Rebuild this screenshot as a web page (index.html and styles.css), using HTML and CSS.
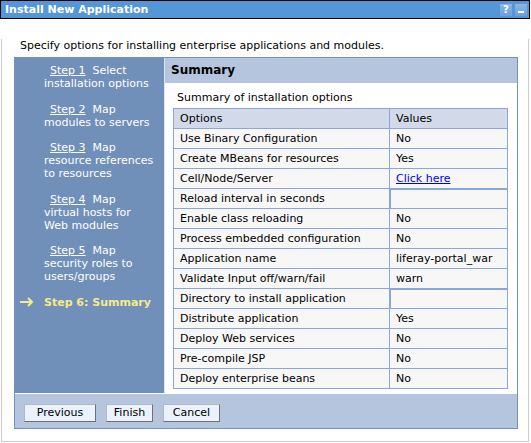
FILE: index.html
```html
<!DOCTYPE html>
<html>
<head>
    <title>Install New Application</title>
    <link rel="stylesheet" href="styles.css">
</head>
<body>
    <div class="window">
        <div class="titlebar">
            <span class="title">Install New Application</span>
            <span class="tools">
                <span class="tool">?</span>
                <span class="tool minimize"></span>
            </span>
        </div>

        <div class="window-body">
            <p class="intro">Specify options for installing enterprise applications and modules.</p>

            <div class="panel">
                <div class="wizard">
                    <div class="steps">
                        <div class="step">
                            <span class="marker"></span>
                            <span class="step-text"><a class="step-link">Step 1</a>&nbsp;&nbsp;Select<br>installation options</span>
                        </div>
                        <div class="step">
                            <span class="marker"></span>
                            <span class="step-text"><a class="step-link">Step 2</a>&nbsp;&nbsp;Map<br>modules to servers</span>
                        </div>
                        <div class="step">
                            <span class="marker"></span>
                            <span class="step-text"><a class="step-link">Step 3</a>&nbsp;&nbsp;Map<br>resource references<br>to resources</span>
                        </div>
                        <div class="step">
                            <span class="marker"></span>
                            <span class="step-text"><a class="step-link">Step 4</a>&nbsp;&nbsp;Map<br>virtual hosts for<br>Web modules</span>
                        </div>
                        <div class="step">
                            <span class="marker"></span>
                            <span class="step-text"><a class="step-link">Step 5</a>&nbsp;&nbsp;Map<br>security roles to<br>users/groups</span>
                        </div>
                        <div class="step current">
                            <span class="marker">
                                <svg width="14" height="10" viewBox="0 0 14 10">
                                    <path d="M0 5 H12 M8 1 L12 5 L8 9" fill="none" stroke="#f6ea8c" stroke-width="2"/>
                                </svg>
                            </span>
                            <span class="step-text">Step 6: Summary</span>
                        </div>
                    </div>

                    <div class="page">
                        <div class="page-head">Summary</div>
                        <div class="page-body">
                            <p class="caption">Summary of installation options</p>
                            <table class="summary">
                                <tr><th class="opt">Options</th><th>Values</th></tr>
                                <tr><td>Use Binary Configuration</td><td>No</td></tr>
                                <tr><td>Create MBeans for resources</td><td>Yes</td></tr>
                                <tr><td>Cell/Node/Server</td><td><a class="link">Click here</a></td></tr>
                                <tr><td>Reload interval in seconds</td><td class="empty"></td></tr>
                                <tr><td>Enable class reloading</td><td>No</td></tr>
                                <tr><td>Process embedded configuration</td><td>No</td></tr>
                                <tr><td>Application name</td><td>liferay-portal_war</td></tr>
                                <tr><td>Validate Input off/warn/fail</td><td>warn</td></tr>
                                <tr><td>Directory to install application</td><td class="empty"></td></tr>
                                <tr><td>Distribute application</td><td>Yes</td></tr>
                                <tr><td>Deploy Web services</td><td>No</td></tr>
                                <tr><td>Pre-compile JSP</td><td>No</td></tr>
                                <tr><td>Deploy enterprise beans</td><td>No</td></tr>
                            </table>
                        </div>
                    </div>
                </div>

                <div class="buttons">
                    <button class="btn btn-previous">Previous</button>
                    <button class="btn btn-finish">Finish</button>
                    <button class="btn btn-cancel">Cancel</button>
                </div>
            </div>
        </div>
    </div>
</body>
</html>
```

FILE: styles.css
```css
body {
    margin: 0;
    background: white;
    font-family: "DejaVu Sans", Verdana, sans-serif;
    font-size: 11px;
    color: black;
}

.window {
    width: 530px;
}

.titlebar {
    height: 17px;
    border: 1px solid black;
    background-color: #5596d6;
    display: flex;
    align-items: center;
    justify-content: space-between;
    padding-left: 4px;
}

.title {
    color: white;
    font-weight: bold;
    font-size: 11px;
}

.tools {
    display: flex;
    gap: 3px;
    padding-right: 2px;
}

.tool {
    width: 12px;
    height: 12px;
    background: linear-gradient(to bottom, #8cb6e6, #6a9fdb);
    color: white;
    font-size: 10px;
    font-weight: bold;
    line-height: 12px;
    text-align: center;
}

.minimize {
    position: relative;
}

.minimize::after {
    content: "";
    position: absolute;
    left: 3px;
    right: 3px;
    bottom: 3px;
    height: 2px;
    background-color: white;
}

.window-body {
    margin: 0 1px;
    border: 1px solid #cccccc;
    border-top: none;
    padding: 0 10px 12px 12px;
}

.intro {
    margin: 20px 0 4px 6px;
    line-height: 14px;
}

.panel {
    border: 1px solid #7492c0;
}

.wizard {
    display: flex;
}

.steps {
    width: 149px;
    background-color: #7190b9;
    color: white;
    padding-top: 6px;
}

.step {
    display: flex;
    line-height: 13px;
    margin-bottom: 12.5px;
}

.marker {
    width: 29px;
    flex-shrink: 0;
    display: flex;
    align-items: center;
    padding-left: 5px;
    box-sizing: border-box;
}

.step-text {
    text-indent: 6px;
}

.step-link {
    color: white;
    text-decoration: underline;
}

.current .step-text {
    color: #f6ea8c;
    font-weight: bold;
    text-indent: 0;
}

.page {
    flex: 1;
    border-left: 1px solid #dfe6f1;
    background-color: white;
}

.page-head {
    height: 25px;
    background-color: #b5c5de;
    font-weight: bold;
    font-size: 12px;
    line-height: 25px;
    padding-left: 6px;
}

.page-body {
    padding: 8px 9px 4px 8px;
}

.caption {
    margin: 0 0 3px 4px;
    line-height: 14px;
}

.summary {
    width: 100%;
    border-collapse: collapse;
    border: 1px solid #8ca6dc;
}

.summary th,
.summary td {
    border: 1px solid #8ca6dc;
    height: 19px;
    line-height: 17px;
    padding: 0 6px;
    text-align: left;
    font-weight: normal;
    white-space: nowrap;
}

.summary th {
    background-color: #d2d9e8;
}

.summary td {
    background-color: #f7f7f7;
}

.summary .opt {
    width: 203px;
}

.summary td.empty {
    box-shadow: inset 1px 1px 0 #8ca6dc;
}

.link {
    color: #0000ee;
    text-decoration: underline;
}

.buttons {
    margin-top: 1px;
    height: 34px;
    background-color: #b5c5de;
    padding: 10px 0 0 9px;
    box-sizing: border-box;
    display: flex;
    align-items: flex-start;
    gap: 10px;
}

.btn {
    font-family: "DejaVu Sans", Verdana, sans-serif;
    font-size: 11px;
    height: 18px;
    padding: 0;
    background-color: #eaf2fe;
    border: 1px solid;
    border-color: #b8b8b8 #707070 #707070 #b8b8b8;
    color: black;
    line-height: 14px;
}

.btn-previous { width: 72px; }
.btn-finish { width: 47px; }
.btn-cancel { width: 57px; }
```
